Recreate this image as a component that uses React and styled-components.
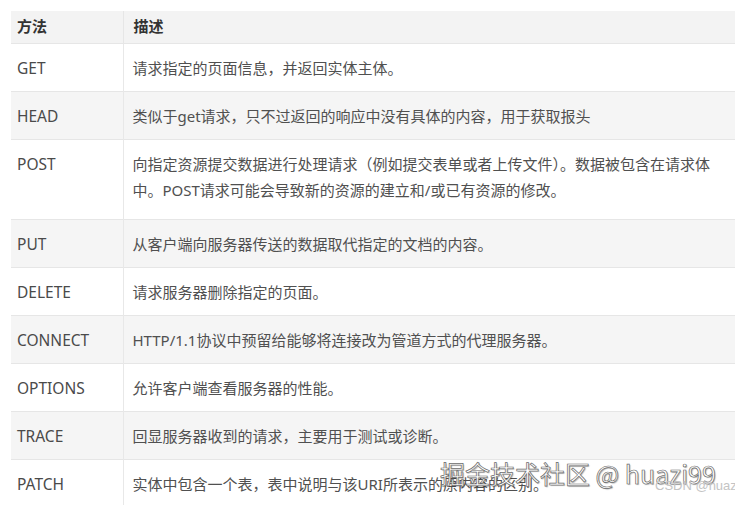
import React from 'react'
import styled, { createGlobalStyle } from 'styled-components'

const GlobalStyle = createGlobalStyle`
  html, body {
    margin: 0;
    padding: 0;
    background: #ffffff;
  }
  body {
    font-family: "Noto Sans", "Noto Sans CJK SC", sans-serif;
    overflow: hidden;
  }
`
const Page = styled.div`
  position: relative;
  width: 735px;
  height: 505px;
  overflow: hidden;
  padding: 11px 0 0 11px;
  box-sizing: border-box;
`
const Table = styled.table`
  width: 724px;
  border-collapse: collapse;
  table-layout: fixed;
  font-size: 15px;
  color: #505050;
`
const HeadCell = styled.th`
  height: 30px;
  padding: 0 0 2px ${p => (p.$first ? 6 : 10)}px;
  text-align: left;
  font-weight: bold;
  color: #333333;
  line-height: 24px;
  background: #f3f3f3;
  border-bottom: 1px solid #e6e6e6;
  border-right: ${p => (p.$first ? '1px solid #e6e6e6' : 'none')};
`
const Row = styled.tr`
  height: ${p => (p.$tall ? 80 : 48)}px;
  background: ${p => (p.$shade ? '#f5f5f5' : '#ffffff')};
  border-bottom: 1px solid #e6e6e6;
`
const MethodCell = styled.td`
  width: 106px;
  padding: 11px 0 0 6px;
  line-height: 26px;
  font-size: 15.5px;
  vertical-align: top;
  border-right: 1px solid #e8e8e8;
  color: #4a4a4a;
`
const DescCell = styled.td`
  padding: 11px 8px 0 9px;
  line-height: 26px;
  vertical-align: top;
`
const Watermark = styled.div`
  position: absolute;
  left: 440px;
  top: 455px;
  font-family: "Noto Sans CJK SC", "Noto Sans", sans-serif;
  font-size: 25px;
  color: #ffffff;
  white-space: nowrap;
  -webkit-text-stroke: 0.7px #6a6a6a;
  text-shadow: 1px 1px 1px rgba(0, 0, 0, 0.3);
`
const Credit = styled.div`
  position: absolute;
  left: 655px;
  top: 478px;
  font-family: "Liberation Sans", sans-serif;
  font-size: 13px;
  color: #c4c4c4;
  white-space: nowrap;
`

const rows = [
  ['GET', '请求指定的页面信息，并返回实体主体。'],
  ['HEAD', '类似于get请求，只不过返回的响应中没有具体的内容，用于获取报头'],
  ['POST', '向指定资源提交数据进行处理请求（例如提交表单或者上传文件）。数据被包含在请求体中。POST请求可能会导致新的资源的建立和/或已有资源的修改。', true],
  ['PUT', '从客户端向服务器传送的数据取代指定的文档的内容。'],
  ['DELETE', '请求服务器删除指定的页面。'],
  ['CONNECT', 'HTTP/1.1协议中预留给能够将连接改为管道方式的代理服务器。'],
  ['OPTIONS', '允许客户端查看服务器的性能。'],
  ['TRACE', '回显服务器收到的请求，主要用于测试或诊断。'],
  ['PATCH', '实体中包含一个表，表中说明与该URI所表示的原内容的区别。'],
]

class App extends React.Component {
  render() {
    return (
      <Page>
        <GlobalStyle />
        <Table>
          <colgroup>
            <col style={{ width: 112 }} />
            <col />
          </colgroup>
          <thead>
            <tr>
              <HeadCell $first>方法</HeadCell>
              <HeadCell>描述</HeadCell>
            </tr>
          </thead>
          <tbody>
            {rows.map(([method, desc, tall], i) => (
              <Row key={method} $shade={i % 2 === 1} $tall={tall}>
                <MethodCell>{method}</MethodCell>
                <DescCell>{desc}</DescCell>
              </Row>
            ))}
          </tbody>
        </Table>
        <Watermark>掘金技术社区 @ huazi99</Watermark>
        <Credit>CSDN @huazi99</Credit>
      </Page>
    )
  }
}
export default App
